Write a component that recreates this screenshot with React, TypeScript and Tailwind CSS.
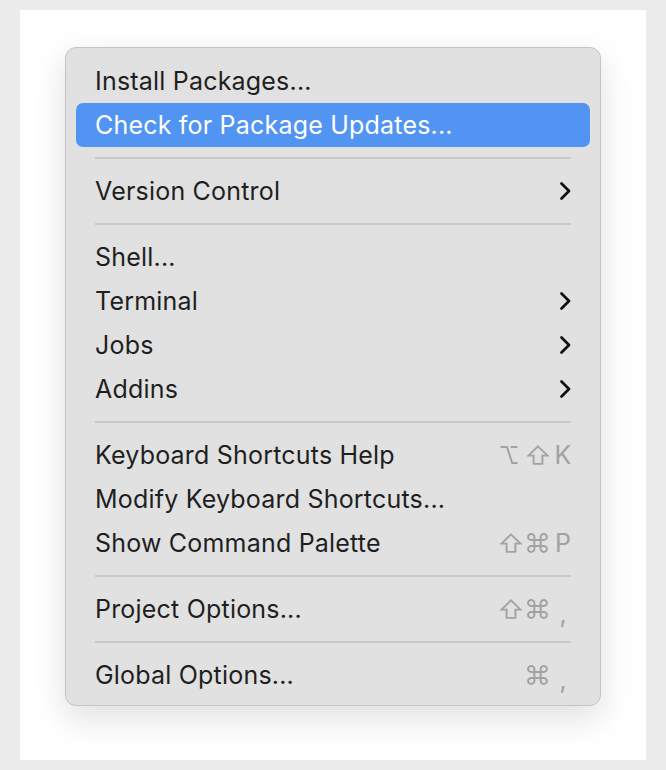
import React from "react";

type Item =
  | { type: "item"; label: string; shortcut?: [string, string, string]; sub?: boolean; active?: boolean }
  | { type: "sep" };

const items: Item[] = [
  { type: "item", label: "Install Packages..." },
  { type: "item", label: "Check for Package Updates...", active: true },
  { type: "sep" },
  { type: "item", label: "Version Control", sub: true },
  { type: "sep" },
  { type: "item", label: "Shell..." },
  { type: "item", label: "Terminal", sub: true },
  { type: "item", label: "Jobs", sub: true },
  { type: "item", label: "Addins", sub: true },
  { type: "sep" },
  { type: "item", label: "Keyboard Shortcuts Help", shortcut: ["opt", "shift", "K"] },
  { type: "item", label: "Modify Keyboard Shortcuts..." },
  { type: "item", label: "Show Command Palette", shortcut: ["shift", "cmd", "P"] },
  { type: "sep" },
  { type: "item", label: "Project Options...", shortcut: ["shift", "cmd", ","] },
  { type: "sep" },
  { type: "item", label: "Global Options...", shortcut: ["", "cmd", ","] },
];

const GRAY = "#a2a2a2";

function Chevron() {
  return (
    <svg width="14" height="20" viewBox="0 0 14 20" className="block">
      <path d="M3.5 2.5 L11 10 L3.5 17.5" fill="none" stroke="#111" strokeWidth="2.8" strokeLinecap="round" strokeLinejoin="round" />
    </svg>
  );
}

function Sym({ k }: { k: string }) {
  if (k === "cmd")
    return (
      <svg width="21" height="20" viewBox="2 2 20 20" preserveAspectRatio="none" className="block">
        <path d="M15 6v12a3 3 0 1 0 3-3H6a3 3 0 1 0 3 3V6a3 3 0 1 0-3 3h12a3 3 0 1 0-3-3" fill="none" stroke={GRAY} strokeWidth="1.9" />
      </svg>
    );
  if (k === "shift")
    return (
      <svg width="22" height="20" viewBox="0 0 22 20" className="block">
        <path d="M11 1.4 L20.6 10.6 H15.4 V18.9 H6.6 V10.6 H1.4 Z" fill="none" stroke={GRAY} strokeWidth="1.9" strokeLinejoin="miter" />
      </svg>
    );
  if (k === "opt")
    return (
      <svg width="18" height="20" viewBox="0 0 18 20" className="block">
        <path d="M0.5 2 H7 L12.2 18 H17.5" fill="none" stroke={GRAY} strokeWidth="2" />
        <path d="M10.5 2 H17.5" fill="none" stroke={GRAY} strokeWidth="2" />
      </svg>
    );
  return null;
}

export default function App() {
  return (
    <div className="w-[666px] h-[770px] bg-[#ececec] pt-[10px] pl-[20px]" style={{ fontFamily: "Inter, 'Noto Sans', 'DejaVu Sans', sans-serif" }}>
      <div className="w-[626px] h-[750px] bg-white pt-[37px] pl-[45px]">
        <div className="w-[536px] rounded-[11px] border border-[#c4c4c4] bg-[#e1e1e1] pt-[11px] pb-[8px] shadow-[0_12px_34px_rgba(0,0,0,0.13)]">
          {items.map((it, i) =>
            it.type === "sep" ? (
              <div key={i} className="h-[22px] flex items-center px-[29px]">
                <div className="h-[2px] w-full bg-[#c9c9c9]" />
              </div>
            ) : (
              <div key={i} className="px-[10px]">
                <div
                  className={
                    "h-[44px] flex items-center justify-between pl-[19px] pr-[18px] rounded-[7px] " +
                    (it.active ? "bg-[#5294f2] text-white" : "text-[#1f1f1f]")
                  }
                >
                  <span className="text-[25px] leading-none tracking-[0.2px]">{it.label}</span>
                  {it.sub && <Chevron />}
                  {it.shortcut && (
                    <span className="flex items-center">
                      <span className="w-[24px] flex justify-start">{it.shortcut[0] && <Sym k={it.shortcut[0]} />}</span>
                      <span className="ml-[3px] w-[22px] flex justify-start"><Sym k={it.shortcut[1]} /></span>
                      <span className="ml-[5px] w-[18px] flex justify-center text-[25px] leading-none text-[#a2a2a2]">
                        {it.shortcut[2] === "," ? <span className="relative top-[5px]">,</span> : it.shortcut[2]}
                      </span>
                    </span>
                  )}
                </div>
              </div>
            )
          )}
        </div>
      </div>
    </div>
  );
}
